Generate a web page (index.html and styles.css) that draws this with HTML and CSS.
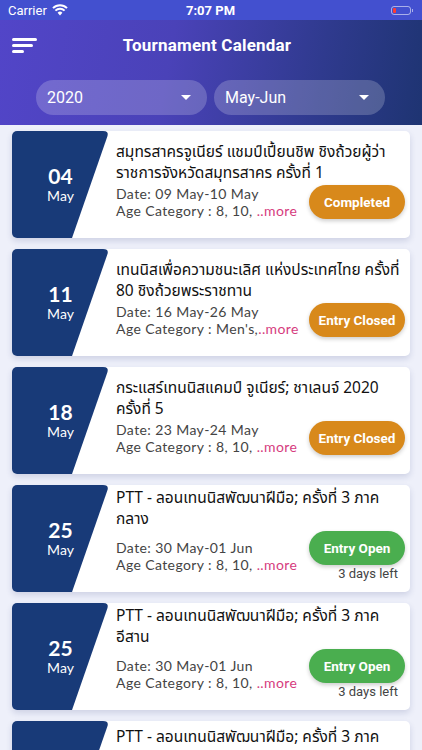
FILE: index.html
```html
<!DOCTYPE html>
<html>
<head>
<meta charset="utf-8">
<link rel="stylesheet" href="styles.css">
</head>
<body>
<div class="status">
  <div class="status-left">Carrier
    <svg class="wifi" width="16" height="12" viewBox="0 0 16 12"><path d="M8 11.5 L5.6 8.8 A3.4 3.4 0 0 1 10.4 8.8 Z" fill="#fff"/><path d="M3.4 6.6 A6.6 6.6 0 0 1 12.6 6.6" stroke="#fff" stroke-width="2" fill="none"/><path d="M1 4.1 A10 10 0 0 1 15 4.1" stroke="#fff" stroke-width="2" fill="none"/></svg>
  </div>
  <div class="status-time">7:07 PM</div>
  <div class="status-right">
    <div class="battery"><div class="battery-level"></div></div><div class="battery-tip"></div>
  </div>
</div>
<header class="header">
  <div class="topbar">
    <div class="menu"><span class="l1"></span><span class="l2"></span><span class="l3"></span></div>
    <div class="title">Tournament Calendar</div>
  </div>
  <div class="filters">
    <div class="select">2020<span class="caret"></span></div>
    <div class="select">May-Jun<span class="caret"></span></div>
  </div>
</header>
<main class="list">
  <div class="card">
    <div class="date"><div class="day">04</div><div class="mon">May</div></div>
    <div class="content">
      <div class="name">สมุทรสาครจูเนียร์ แชมป์เปี้ยนชิพ ชิงถ้วยผู้ว่า<br>ราชการจังหวัดสมุทรสาคร ครั้งที่ 1</div>
      <div class="row">
        <div class="info"><div>Date: 09 May-10 May</div><div>Age Category : 8, 10, <span class="more">..more</span></div></div>
        <div class="status-group"><div class="badge orange">Completed</div></div>
      </div>
    </div>
  </div>
  <div class="card">
    <div class="date"><div class="day">11</div><div class="mon">May</div></div>
    <div class="content">
      <div class="name">เทนนิสเพื่อความชนะเลิศ แห่งประเทศไทย ครั้งที่<br>80 ชิงถ้วยพระราชทาน</div>
      <div class="row">
        <div class="info"><div>Date: 16 May-26 May</div><div>Age Category : Men's,<span class="more">..more</span></div></div>
        <div class="status-group"><div class="badge orange">Entry Closed</div></div>
      </div>
    </div>
  </div>
  <div class="card">
    <div class="date"><div class="day">18</div><div class="mon">May</div></div>
    <div class="content">
      <div class="name">กระแสร์เทนนิสแคมป์ จูเนียร์; ชาเลนจ์ 2020<br>ครั้งที่ 5</div>
      <div class="row">
        <div class="info"><div>Date: 23 May-24 May</div><div>Age Category : 8, 10, <span class="more">..more</span></div></div>
        <div class="status-group"><div class="badge orange">Entry Closed</div></div>
      </div>
    </div>
  </div>
  <div class="card">
    <div class="date"><div class="day">25</div><div class="mon">May</div></div>
    <div class="content">
      <div class="name">PTT - ลอนเทนนิสพัฒนาฝีมือ; ครั้งที่ 3 ภาค<br>กลาง</div>
      <div class="row">
        <div class="info"><div>Date: 30 May-01 Jun</div><div>Age Category : 8, 10, <span class="more">..more</span></div></div>
        <div class="status-group"><div class="badge green">Entry Open</div><div class="left">3 days left</div></div>
      </div>
    </div>
  </div>
  <div class="card">
    <div class="date"><div class="day">25</div><div class="mon">May</div></div>
    <div class="content">
      <div class="name">PTT - ลอนเทนนิสพัฒนาฝีมือ; ครั้งที่ 3 ภาค<br>อีสาน</div>
      <div class="row">
        <div class="info"><div>Date: 30 May-01 Jun</div><div>Age Category : 8, 10, <span class="more">..more</span></div></div>
        <div class="status-group"><div class="badge green">Entry Open</div><div class="left">3 days left</div></div>
      </div>
    </div>
  </div>
  <div class="card">
    <div class="date"></div>
    <div class="content top">
      <div class="name">PTT - ลอนเทนนิสพัฒนาฝีมือ; ครั้งที่ 3 ภาค</div>
    </div>
  </div>
</main>
</body>
</html>
```
FILE: styles.css
```css
html, body {
  margin: 0;
  padding: 0;
}
body {
  width: 422px;
  height: 750px;
  overflow: hidden;
  background: #eef0fa;
  font-family: Roboto, "Noto Sans", "Noto Sans Thai", sans-serif;
}
.status {
  height: 20px;
  background: #4350cf;
  color: #fff;
  display: flex;
  align-items: center;
  justify-content: space-between;
  padding: 0 9px 0 8px;
  font-size: 13px;
}
.status-left {
  display: flex;
  align-items: center;
  gap: 5px;
  width: 100px;
}
.status-time {
  font-weight: 700;
  font-size: 13px;
}
.status-right {
  width: 100px;
  display: flex;
  justify-content: flex-end;
  align-items: center;
}
.battery {
  width: 20px;
  height: 9px;
  border: 1px solid rgba(255,255,255,0.55);
  border-radius: 3px;
  padding: 1px;
  box-sizing: border-box;
  display: flex;
}
.battery-level {
  width: 3px;
  background: #ff3b30;
  border-radius: 1px;
}
.battery-tip {
  width: 1.5px;
  height: 3px;
  background: rgba(255,255,255,0.55);
  margin-left: 1px;
}
.header {
  height: 105px;
  background: linear-gradient(100deg, #5245c8 0%, #4a42b8 40%, #2f3a8e 75%, #1e3472 100%);
  box-sizing: border-box;
  padding-top: 12px;
}
.topbar {
  height: 26px;
  display: flex;
  align-items: center;
  padding-left: 12px;
}
.menu {
  display: flex;
  flex-direction: column;
  gap: 3px;
  width: 26px;
}
.menu span {
  display: block;
  height: 3px;
  background: #fff;
  border-radius: 2px;
}
.menu .l1 { width: 25px; }
.menu .l2 { width: 21px; }
.menu .l3 { width: 12px; }
.title {
  flex: 1;
  text-align: center;
  color: #fff;
  font-weight: 700;
  font-size: 17px;
  padding-right: 46px;
  letter-spacing: 0.2px;
}
.filters {
  display: flex;
  gap: 7px;
  padding-left: 36px;
  margin-top: 22px;
}
.select {
  width: 171px;
  height: 35px;
  border-radius: 18px;
  background: rgba(255,255,255,0.2);
  color: #fff;
  font-size: 16px;
  display: flex;
  align-items: center;
  justify-content: space-between;
  box-sizing: border-box;
  padding: 0 16px 0 11px;
}
.caret {
  width: 0;
  height: 0;
  border-left: 5px solid transparent;
  border-right: 5px solid transparent;
  border-top: 5px solid #fff;
}
.list {
  display: flex;
  flex-direction: column;
  gap: 11px;
  padding: 6px 12px;
}
.card {
  height: 107px;
  flex: none;
  display: flex;
  background: #fff;
  border-radius: 5px;
  overflow: hidden;
  box-shadow: 0 3px 6px rgba(40, 50, 120, 0.16);
}
.date {
  width: 97px;
  flex: none;
  background: #183a78;
  clip-path: path('M0 0 H91 Q97 0 95.5 5 L60 107 H0 Z');
  color: #fff;
  display: flex;
  flex-direction: column;
  align-items: center;
  justify-content: center;
  font-family: Lato, "Open Sans", sans-serif;
}
.day {
  font-size: 21px;
  font-weight: 700;
  line-height: 22px;
}
.mon {
  font-size: 14px;
  line-height: 18px;
}
.content {
  flex: 1;
  display: flex;
  flex-direction: column;
  justify-content: center;
  padding: 0 5px 8px 7px;
  min-width: 0;
}
.content.top {
  justify-content: flex-start;
  padding-top: 6px;
}
.name {
  font-size: 15.5px;
  line-height: 21px;
  color: #111;
  white-space: nowrap;
  font-family: "Noto Sans Thai", "Noto Sans", Roboto, sans-serif;
}
.row {
  display: flex;
  align-items: center;
  justify-content: space-between;
  margin-top: 1px;
}
.info {
  font-family: Lato, "Open Sans", sans-serif;
  font-size: 14px;
  letter-spacing: 0.4px;
  line-height: 17px;
  color: #444;
  white-space: nowrap;
}
.more {
  color: #d63c7e;
}
.status-group {
  display: flex;
  flex-direction: column;
  align-items: flex-end;
}
.badge {
  width: 96px;
  height: 34px;
  border-radius: 17px;
  color: #fff;
  font-size: 13.5px;
  font-weight: 700;
  display: flex;
  align-items: center;
  justify-content: center;
  box-shadow: 0 2px 4px rgba(0,0,0,0.2);
}
.orange { background: #d8891b; }
.green { background: #4aae4f; }
.left {
  font-size: 13px;
  color: #444;
  line-height: 14px;
  margin-top: 2px;
  padding-right: 7px;
}
```
